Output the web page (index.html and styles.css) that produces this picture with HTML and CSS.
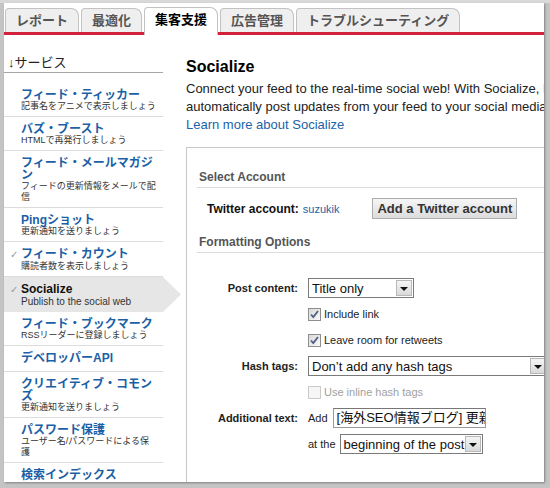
FILE: index.html
```html
<!DOCTYPE html>
<html lang="ja">
  <head>
    <meta charset="UTF-8"/>
    <title>Socialize</title>
    <link rel="stylesheet" href="styles.css">
  </head>
  <body>
    <div class="screen">
      <div class="window">
        <div class="tabs">
          <div class="tab">レポート</div>
          <div class="tab">最適化</div>
          <div class="tab active">集客支援</div>
          <div class="tab">広告管理</div>
          <div class="tab">トラブルシューティング</div>
        </div>

        <div class="content">
          <div class="sidebar">
            <div class="side-head">↓サービス</div>
            <ul class="services">
              <li><span class="title">フィード・ティッカー</span><span class="sub">記事名をアニメで表示しましょう</span></li>
              <li><span class="title">バズ・ブースト</span><span class="sub">HTMLで再発行しましょう</span></li>
              <li><span class="title">フィード・メールマガジン</span><span class="sub">フィードの更新情報をメールで配信</span></li>
              <li><span class="title">Pingショット</span><span class="sub">更新通知を送りましょう</span></li>
              <li><span class="title"><span class="check">✓</span>フィード・カウント</span><span class="sub">購読者数を表示しましょう</span></li>
              <li class="active"><span class="title"><span class="check">✓</span>Socialize</span><span class="sub">Publish to the social web</span></li>
              <li><span class="title">フィード・ブックマーク</span><span class="sub">RSSリーダーに登録しましょう</span></li>
              <li class="short"><span class="title">デベロッパーAPI</span></li>
              <li><span class="title">クリエイティブ・コモンズ</span><span class="sub">更新通知を送りましょう</span></li>
              <li><span class="title">パスワード保護</span><span class="sub">ユーザー名/パスワードによる保護</span></li>
              <li><span class="title">検索インデックス</span></li>
            </ul>
          </div>

          <div class="main">
            <h1>Socialize</h1>
            <p class="intro">Connect your feed to the real-time social web! With Socialize, FeedBurner can automatically post updates from your feed to your social media accounts.<br><a href="#">Learn more about Socialize</a></p>

            <div class="panel">
              <h2>Select Account</h2>
              <div class="account">
                <span class="acc-label">Twitter account:</span>
                <a class="user" href="#">suzukik</a>
                <span class="btn">Add a Twitter account</span>
              </div>

              <h2 class="second">Formatting Options</h2>
              <div class="form">
                <div class="label">Post content:</div>
                <div class="ctrl"><div class="select w-content"><span class="val">Title only</span><span class="arrow"></span></div></div>

                <div></div>
                <div class="ctrl"><span class="cb"><svg width="11" height="11" viewBox="0 0 11 11"><path d="M2 5.5 L4.3 8 L9 2" fill="none" stroke="#4d5f86" stroke-width="1.8"/></svg></span><span class="opt">Include link</span></div>

                <div></div>
                <div class="ctrl"><span class="cb"><svg width="11" height="11" viewBox="0 0 11 11"><path d="M2 5.5 L4.3 8 L9 2" fill="none" stroke="#4d5f86" stroke-width="1.8"/></svg></span><span class="opt">Leave room for retweets</span></div>

                <div class="label">Hash tags:</div>
                <div class="ctrl"><div class="select w-hash"><span class="val">Don’t add any hash tags</span><span class="arrow"></span></div></div>

                <div></div>
                <div class="ctrl"><span class="cb off"></span><span class="opt dim">Use inline hash tags</span></div>

                <div class="label">Additional text:</div>
                <div class="ctrl"><span class="small">Add</span><div class="input">[海外SEO情報ブログ] 更新情報</div></div>

                <div></div>
                <div class="ctrl"><span class="small at">at the</span><div class="select w-pos"><span class="val">beginning of the post</span><span class="arrow"></span></div></div>
              </div>
            </div>
          </div>
        </div>
      </div>
    </div>
  </body>
</html>
```

FILE: styles.css
```css
body {
  margin: 0;
  font-family: "Liberation Sans", "Noto Sans CJK JP", sans-serif;
  color: #222;
}

/* screenshot frame */
.screen {
  width: 550px;
  height: 488px;
  box-sizing: border-box;
  padding: 3px 6px 6px 4px;
  background: #c4c4c4;
  box-shadow: inset 0 3px 0 #d9d9d9;
}

.window {
  width: 540px;
  height: 479px;
  background: #fff;
  overflow: hidden;
  box-shadow: 1px 1px 2px rgba(0, 0, 0, 0.35);
}

/* tabs */
.tabs {
  display: flex;
  align-items: flex-end;
  gap: 2px;
  height: 24px;
  padding: 5px 0 0 1px;
  border-bottom: 3px solid #d3203b;
}

.tab {
  height: 23px;
  line-height: 23px;
  padding: 0 10px;
  border: 1px solid #c2c2c2;
  border-bottom: 0;
  border-radius: 4px 8px 0 0;
  background: #efefef;
  color: #555;
  font-size: 13px;
  font-weight: bold;
}

.tab.active {
  height: 27px;
  margin-bottom: -3px;
  background: #fff;
  color: #000;
}

.content {
  display: flex;
}

/* sidebar */
.sidebar {
  width: 159px;
  flex-shrink: 0;
  padding-top: 20px;
}

.side-head {
  font-size: 13px;
  line-height: 16px;
  padding: 0 0 1px 4px;
  border-bottom: 1px solid #a6a6a6;
}

.services {
  list-style: none;
  margin: 10px 0 0;
  padding: 0;
}

.services li {
  padding: 6px 0 4px 17px;
  border-bottom: 1px solid #dcdcdc;
}

.services li.short {
  padding-bottom: 7px;
}

.title {
  display: block;
  font-size: 12px;
  line-height: 12px;
  font-weight: bold;
  color: #1b5fa6;
}

.sub {
  display: block;
  font-size: 9px;
  line-height: 11px;
  color: #333;
  padding-right: 6px;
}

.check {
  display: inline-block;
  width: 11px;
  margin-left: -11px;
  font-family: "DejaVu Sans", sans-serif;
  font-size: 10px;
  font-weight: normal;
  color: #999;
}

.services li.active {
  margin-right: -18px;
  padding-right: 18px;
  background: #e6e6e6;
  border-bottom-color: transparent;
  clip-path: polygon(0 0, 159px 0, 100% 50%, 159px 100%, 0 100%);
}

.services li.active .title {
  color: #111;
}

.services li.active .sub {
  font-size: 10px;
}

/* main */
.main {
  width: 460px;
  flex-shrink: 0;
  margin-left: 23px;
  padding-top: 22px;
}

h1 {
  margin: 0;
  font-size: 16px;
  line-height: 20px;
  color: #000;
}

.intro {
  margin: 3px 0 0;
  font-size: 13px;
  line-height: 18px;
}

a {
  color: #2163a8;
  text-decoration: none;
}

.panel {
  width: 440px;
  margin-top: 13px;
  padding: 22px 0 40px;
  border: 1px solid #c8c8c8;
}

.panel h2 {
  margin: 0 0 0 10px;
  padding: 0 0 2px 2px;
  font-size: 12px;
  line-height: 15px;
  color: #555;
  border-bottom: 1px solid #dcdcdc;
}

.panel h2.second {
  margin-top: 16px;
}

.account {
  display: flex;
  align-items: center;
  height: 21px;
  margin: 10px 0 0 20px;
}

.acc-label {
  font-size: 12px;
  font-weight: bold;
  color: #111;
}

.user {
  margin-left: 4px;
  font-size: 11px;
}

.btn {
  height: 21px;
  line-height: 19px;
  box-sizing: border-box;
  margin-left: 33px;
  padding: 0 4px;
  border: 1px solid #adadad;
  background: linear-gradient(#f6f6f6, #dcdcdc);
  font-size: 13px;
  font-weight: bold;
  color: #333;
}

/* formatting form */
.form {
  display: grid;
  grid-template-columns: 111px auto;
  grid-auto-rows: 20px;
  column-gap: 10px;
  row-gap: 6px;
  align-items: center;
  margin-top: 25px;
}

.label {
  text-align: right;
  font-size: 11px;
  font-weight: bold;
  color: #222;
}

.ctrl {
  display: flex;
  align-items: center;
  height: 20px;
}

.select {
  display: flex;
  align-items: center;
  height: 20px;
  box-sizing: border-box;
  border: 1px solid #7a7a7a;
  background: #fff;
  font-size: 13px;
  color: #111;
}

.select .val {
  flex: 1;
  padding-left: 3px;
  white-space: nowrap;
  overflow: hidden;
}

.select .arrow {
  display: flex;
  align-items: center;
  justify-content: center;
  width: 16px;
  height: 16px;
  margin-right: 1px;
  box-sizing: border-box;
  border: 1px solid #b8b8b8;
  background: linear-gradient(#f5f5f5, #d9d9d9);
}

.select .arrow::after {
  content: "";
  margin-top: 2px;
  border-left: 4px solid transparent;
  border-right: 4px solid transparent;
  border-top: 4px solid #111;
}

.w-content { width: 106px; }
.w-hash { width: 240px; }
.w-pos { width: 143px; }

.cb {
  display: inline-flex;
  align-items: center;
  justify-content: center;
  width: 13px;
  height: 13px;
  box-sizing: border-box;
  margin-right: 3px;
  border: 1px solid #8e8e8e;
  background: linear-gradient(135deg, #d8d8d8, #fafafa);
}

.cb.off {
  border-color: #cacaca;
  background: #f6f6f6;
}

.opt {
  font-size: 11px;
  color: #222;
}

.opt.dim {
  color: #a0a0a0;
}

.small {
  margin-right: 5px;
  font-size: 11px;
  color: #222;
}

.small.at {
  margin-right: 4px;
}

.input {
  width: 153px;
  height: 20px;
  line-height: 18px;
  box-sizing: border-box;
  padding-left: 3px;
  border: 1px solid #999;
  border-top-color: #777;
  font-size: 13px;
  color: #111;
  white-space: nowrap;
  overflow: hidden;
}
```
